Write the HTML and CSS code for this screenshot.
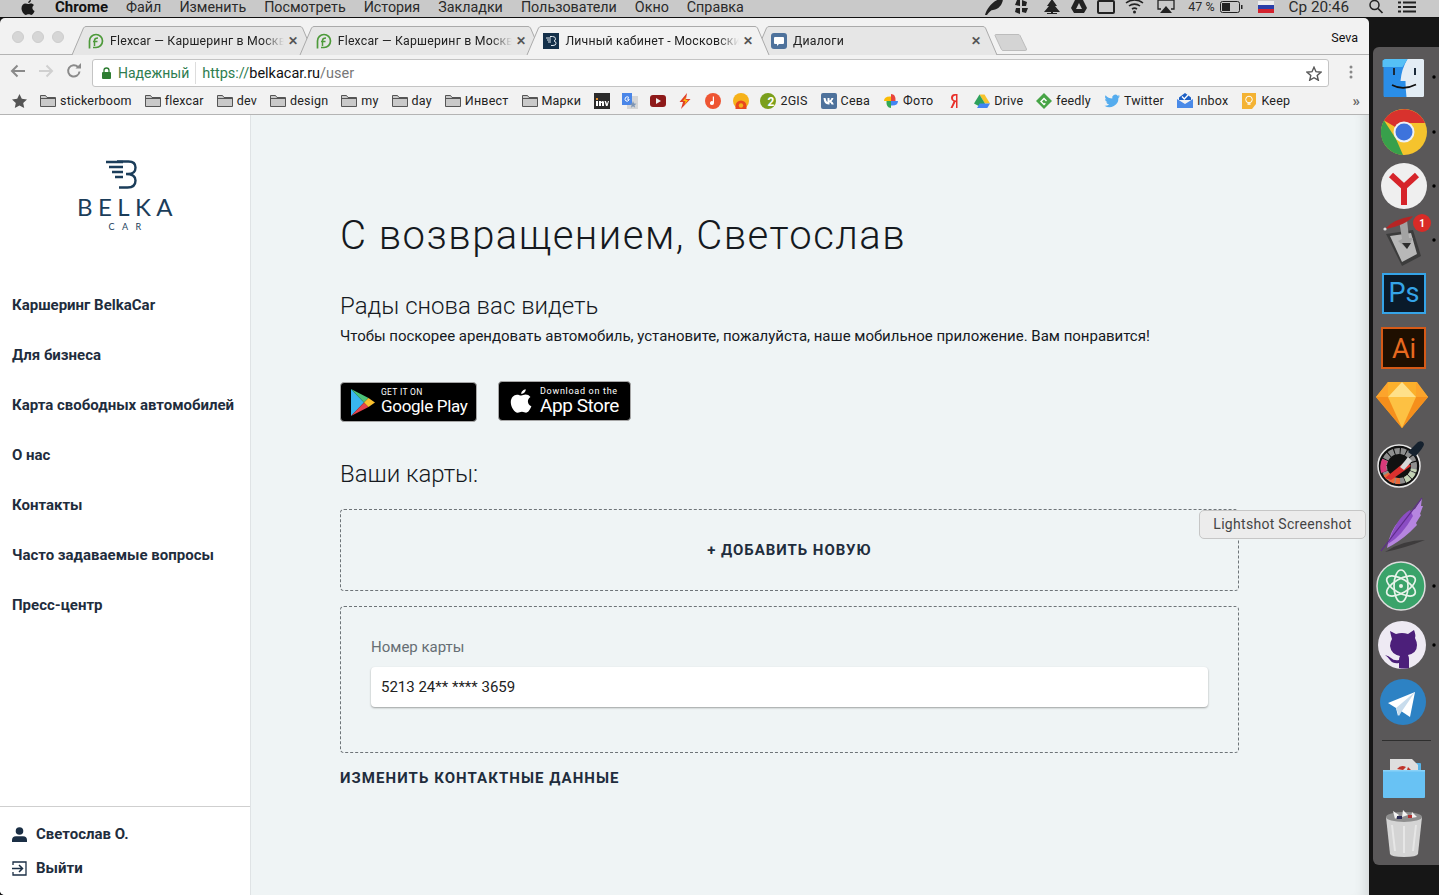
FILE: index.html
```html
<!DOCTYPE html>
<html lang="ru">
<head>
<meta charset="utf-8">
<title>Личный кабинет</title>
<link rel="stylesheet" href="styles.css">
</head>
<body>
<header class="menubar">
  <svg class="apple" width="14" height="15" viewBox="0 0 14 15"><path d="M10 0c.1 1.500-1.200 3-2.800 3C7 1.600 8.500.2 10 0zM7.200 4c.8 0 1.500-.6 2.800-.6 1 0 2.300.5 3 1.600-2.400 1.500-2 4.800.6 5.900-.6 1.500-1.800 4-3.300 4-1 0-1.500-.6-2.700-.6s-1.700.6-2.700.6C3 15 .5 11.500.5 8.300.5 5.300 2.500 3.500 4.400 3.500c1.200 0 2.100.5 2.800.5z" fill="#1a1a1a"/></svg>
  <strong class="menu-app">Chrome</strong>
  <span>Файл</span><span>Изменить</span><span>Посмотреть</span><span>История</span><span>Закладки</span><span>Пользователи</span><span>Окно</span><span>Справка</span>
  <div class="status">
    <svg width="18" height="17" viewBox="0 0 18 17"><path d="M0 16C2 9 8 1 18-1c0 5-3 11-10 12-2 0-4 2-6 5z" fill="#222"/></svg>
    <svg class="st-pin" width="16" height="14" viewBox="0 0 16 14"><path d="M7 6 2 5 4 0h3zM9 6V0l5 2-1 4zM9 8h6l-2 5-4-1zM7 8v6L2 12l1-4z" fill="#222"/></svg>
    <svg class="st-tree" width="18" height="13" viewBox="0 0 18 13"><path d="M9-2 14 5h-2l5 6H1l5-6H4zM8 10h2v3H8zM4 12h10v1H4z" fill="#222"/></svg>
    <svg class="st-drive" width="16" height="14" viewBox="0 0 16 14"><path d="M5-2h6l5 10-3 5H3L0 8zm3 5L5 9h6z" fill="#222" fill-rule="evenodd"/></svg>
    <svg class="st-rect" width="18" height="14" viewBox="0 0 18 14"><rect x="1" y="1" width="16" height="12" rx="1" fill="none" stroke="#222" stroke-width="2"/></svg>
    <svg class="st-wifi" width="19" height="13" viewBox="0 0 19 13"><g fill="none" stroke="#222" stroke-width="1.600"><path d="M1 2C6-2 13-2 18 2"/><path d="M4 5c3-2.500 8-2.500 11 0"/><path d="M7 8c1.500-1 3.500-1 5 0"/></g><circle cx="9.500" cy="11" r="1.500" fill="#222"/></svg>
    <svg class="st-air" width="18" height="14" viewBox="0 0 18 14"><path d="M4 9H1V0h16v9h-3" fill="none" stroke="#222" stroke-width="1.300"/><path d="M9 6l6 7H3z" fill="#222"/></svg>
    <span class="st-pct">47 %</span>
    <svg class="st-bat" width="23" height="12" viewBox="0 0 23 12"><rect x=".5" y=".5" width="19" height="11" rx="2" fill="none" stroke="#222"/><rect x="2" y="2" width="8" height="8" fill="#222"/><rect x="21" y="4" width="1.500" height="4" fill="#222"/></svg>
    <svg class="st-flag" width="16" height="12" viewBox="0 0 16 12"><rect width="16" height="4" fill="#eee"/><rect y="4" width="16" height="4" fill="#2b3fa8"/><rect y="8" width="16" height="4" fill="#d3222e"/></svg>
    <span class="st-clock">Ср 20:46</span>
    <svg class="st-search" width="14" height="14" viewBox="0 0 14 14"><circle cx="5.500" cy="5" r="4.500" fill="none" stroke="#222" stroke-width="1.500"/><path d="M9 8.500 13.500 13" stroke="#222" stroke-width="1.700"/></svg>
    <svg class="st-list" width="18" height="12" viewBox="0 0 18 12"><path d="M5 1.500h13M5 6h13M5 10.500h13M0 1.500h3M0 6h3M0 10.500h3" stroke="#222" stroke-width="2"/></svg>
  </div>
</header>

<div class="desktop">
  <div class="window">
    <div class="tabstrip">
      <div class="lights"><i></i><i></i><i></i></div>
      <div class="tabs">
        <div class="tab">
          <svg class="tab-shape" viewBox="0 0 242 29" preserveAspectRatio="none"><path d="M0 29 11.500 2Q12.500 .5 14 .5H228Q229.500 .5 230.500 2L242 29"/></svg>
          <svg class="fav" viewBox="0 0 16 16"><path d="M1.500 15.500V8a6.500 6.500 0 1 1 6.500 6.500H5" fill="none" stroke="#4d9a3a" stroke-width="1.700"/><path d="M6.500 13V7.500q0-2.500 3.500-2.500M5 8.500h4.500" fill="none" stroke="#4d9a3a" stroke-width="1.500"/></svg>
          <span class="tab-title">Flexcar — Каршеринг в Москв</span>
          <span class="tab-x">✕</span>
        </div>
        <div class="tab">
          <svg class="tab-shape" viewBox="0 0 242 29" preserveAspectRatio="none"><path d="M0 29 11.500 2Q12.500 .5 14 .5H228Q229.500 .5 230.500 2L242 29"/></svg>
          <svg class="fav" viewBox="0 0 16 16"><path d="M1.500 15.500V8a6.500 6.500 0 1 1 6.500 6.500H5" fill="none" stroke="#4d9a3a" stroke-width="1.700"/><path d="M6.500 13V7.500q0-2.500 3.500-2.500M5 8.500h4.500" fill="none" stroke="#4d9a3a" stroke-width="1.500"/></svg>
          <span class="tab-title">Flexcar — Каршеринг в Москв</span>
          <span class="tab-x">✕</span>
        </div>
        <div class="tab tab-active">
          <svg class="tab-shape" viewBox="0 0 242 29" preserveAspectRatio="none"><path d="M0 29 11.500 2Q12.500 .5 14 .5H228Q229.500 .5 230.500 2L242 29"/></svg>
          <svg class="fav" viewBox="0 0 16 16"><rect width="16" height="16" fill="#14304a"/><path d="M7 3.500h2.500q3 0 3 2.300 0 1.700-1.500 2.200 2 .5 2 2.300 0 2.200-3 2.200H8M3 5h5M4 7h4M5 9h3" fill="none" stroke="#dfe7ee" stroke-width="1"/></svg>
          <span class="tab-title">Личный кабинет - Московски</span>
          <span class="tab-x">✕</span>
        </div>
        <div class="tab">
          <svg class="tab-shape" viewBox="0 0 242 29" preserveAspectRatio="none"><path d="M0 29 11.500 2Q12.500 .5 14 .5H228Q229.500 .5 230.500 2L242 29"/></svg>
          <svg class="fav" viewBox="0 0 16 16"><rect width="16" height="16" rx="3" fill="#4e729c"/><path d="M4 4h8a1 1 0 0 1 1 1v5a1 1 0 0 1-1 1H8l-2 2v-2H4a1 1 0 0 1-1-1V5a1 1 0 0 1 1-1z" fill="#fff"/></svg>
          <span class="tab-title">Диалоги</span>
          <span class="tab-x">✕</span>
        </div>
      </div>
      <svg class="newtab" width="33" height="17" viewBox="0 0 33 17"><path d="M1 1.500Q1 .5 2 .5H24Q25.500 .5 26 1.500L32.500 15Q33 16.500 31 16.500H9Q8 16.500 7.500 15.500z" fill="#d4d4d4" stroke="#bcbcbc"/></svg>
      <span class="profile">Seva</span>
    </div>

    <div class="toolbar">
      <svg class="tb-btn" width="16" height="14" viewBox="0 0 16 14"><path d="M15 7H2M7.500 1.500 2 7l5.500 5.500" fill="none" stroke="#8a8a8a" stroke-width="2"/></svg>
      <svg class="tb-btn" width="16" height="14" viewBox="0 0 16 14"><path d="M1 7h13M8.500 1.500 14 7l-5.500 5.500" fill="none" stroke="#d0d0d0" stroke-width="2"/></svg>
      <svg class="tb-btn" width="16" height="16" viewBox="0 0 16 16"><path d="M13.500 8.500A5.700 5.700 0 1 1 12 4" fill="none" stroke="#8a8a8a" stroke-width="2"/><path d="M9.500 5.500h5.500V0z" fill="#8a8a8a"/></svg>
      <div class="omnibox">
        <svg class="lock" width="9" height="12" viewBox="0 0 9 12"><path d="M2 5V3.500a2.500 2.500 0 0 1 5 0V5" fill="none" stroke="#2e7d32" stroke-width="1.300"/><rect y="5" width="9" height="7" rx="1" fill="#2e7d32"/></svg>
        <span class="secure">Надежный</span>
        <span class="url"><span class="url-https">https://</span><span class="url-host">belkacar.ru</span><span class="url-path">/user</span></span>
        <svg class="omni-star" width="16" height="15" viewBox="0 0 16 15"><path d="M8 1.200 10 5.700l4.900.5-3.700 3.200 1.100 4.800L8 11.700l-4.300 2.500 1.100-4.800L1.100 6.200 6 5.700z" fill="none" stroke="#555" stroke-width="1.400"/></svg>
      </div>
      <svg class="kebab" width="4" height="14" viewBox="0 0 4 14"><circle cx="2" cy="2" r="1.500" fill="#888"/><circle cx="2" cy="7" r="1.500" fill="#888"/><circle cx="2" cy="12" r="1.500" fill="#888"/></svg>
    </div>

    <nav class="bookmarks">
      <svg class="bm-star" width="15" height="14" viewBox="0 0 15 14"><path d="M7.500 0 9.800 4.800l5.200.6-3.800 3.500 1 5.100-4.700-2.600L2.800 14l1-5.100L0 5.400l5.200-.6z" fill="#555"/></svg>
      <a class="bm"><svg class="ic" viewBox="0 0 16 14"><path d="M.5 12.500V1.500h5l1.500 2h8.500v9z" fill="#c9c9c9" stroke="#555"/><path d="M.5 4.500h15" stroke="#555"/></svg>stickerboom</a>
      <a class="bm"><svg class="ic" viewBox="0 0 16 14"><path d="M.5 12.500V1.500h5l1.500 2h8.500v9z" fill="#c9c9c9" stroke="#555"/><path d="M.5 4.500h15" stroke="#555"/></svg>flexcar</a>
      <a class="bm"><svg class="ic" viewBox="0 0 16 14"><path d="M.5 12.500V1.500h5l1.500 2h8.500v9z" fill="#c9c9c9" stroke="#555"/><path d="M.5 4.500h15" stroke="#555"/></svg>dev</a>
      <a class="bm"><svg class="ic" viewBox="0 0 16 14"><path d="M.5 12.500V1.500h5l1.500 2h8.500v9z" fill="#c9c9c9" stroke="#555"/><path d="M.5 4.500h15" stroke="#555"/></svg>design</a>
      <a class="bm"><svg class="ic" viewBox="0 0 16 14"><path d="M.5 12.500V1.500h5l1.500 2h8.500v9z" fill="#c9c9c9" stroke="#555"/><path d="M.5 4.500h15" stroke="#555"/></svg>my</a>
      <a class="bm"><svg class="ic" viewBox="0 0 16 14"><path d="M.5 12.500V1.500h5l1.500 2h8.500v9z" fill="#c9c9c9" stroke="#555"/><path d="M.5 4.500h15" stroke="#555"/></svg>day</a>
      <a class="bm"><svg class="ic" viewBox="0 0 16 14"><path d="M.5 12.500V1.500h5l1.500 2h8.500v9z" fill="#c9c9c9" stroke="#555"/><path d="M.5 4.500h15" stroke="#555"/></svg>Инвест</a>
      <a class="bm"><svg class="ic" viewBox="0 0 16 14"><path d="M.5 12.500V1.500h5l1.500 2h8.500v9z" fill="#c9c9c9" stroke="#555"/><path d="M.5 4.500h15" stroke="#555"/></svg>Марки</a>
      <a class="bm bm-icon"><svg class="ic" viewBox="0 0 16 16"><rect width="16" height="16" fill="#2b2b2b"/><path d="M2 8h2v5H2zM5 8h2v1q2-2 3 0v4H8v-3H7v3H5zM10.500 8h1.500l1 3 1-3h1l-1.500 5h-1.500z" fill="#fff"/><rect x="2" y="5" width="2" height="2" fill="#e8912d"/></svg></a>
      <a class="bm bm-icon"><svg class="ic" viewBox="0 0 16 16"><rect x="5" y="3" width="11" height="13" fill="#d5d5d5"/><path d="M0 0h10v12H0z" fill="#4a86e8"/><path d="M11 8l1 2.500 2.500.2-2 1.500.7 2.500-2.200-1.400-2 1.400.6-2.500-2-1.500 2.500-.2z" fill="#7d95b5"/><path d="M7 4.500Q5 3 3.500 4.500 2.300 6.500 4 8q2 .8 3-1V6H5" fill="none" stroke="#fff" stroke-width="1"/></svg></a>
      <a class="bm bm-icon"><svg class="ic" viewBox="0 0 16 16"><rect y="2" width="16" height="12" rx="3" fill="#8e1a1a"/><path d="M6 5l5 3-5 3z" fill="#eee"/></svg></a>
      <a class="bm bm-icon"><svg class="ic" viewBox="0 0 16 16"><path d="M10 0 2.500 9H6L4 16l9.500-10H9z" fill="#e0402a"/><path d="M9 4 6 8h2.500L7.500 12l3.500-5H8.500z" fill="#ffc107"/></svg></a>
      <a class="bm bm-icon"><svg class="ic" viewBox="0 0 16 16"><circle cx="8" cy="8" r="8" fill="#ee5533"/><path d="M9 3.500v6.500a2 2 0 1 1-1.200-1.800V3.500z" fill="#fff"/></svg></a>
      <a class="bm bm-icon"><svg class="ic" viewBox="0 0 16 16"><circle cx="8" cy="8" r="8" fill="#f6b21a"/><path d="M2.500 16v-3a5.500 5.500 0 0 1 11 0v3z" fill="#e8471e"/><circle cx="8" cy="12.500" r="2.200" fill="#f6b21a"/></svg></a>
      <a class="bm"><svg class="ic" viewBox="0 0 16 16"><circle cx="8" cy="8" r="8" fill="#7a9f1c"/><text x="7.500" y="13" class="ic-2">2</text></svg>2GIS</a>
      <a class="bm"><svg class="ic" viewBox="0 0 16 16"><rect width="16" height="16" rx="2" fill="#4e729c"/><path d="M2.500 5h2q.5 3 2 4V5h2v2.500q1.200-.5 2-2.500h2q-.5 2-2 3.200 1.700 1 2.300 3.300h-2.200q-.7-1.700-2.100-2.200v2.200h-1Q3 11.500 2.500 5z" fill="#fff"/></svg>Сева</a>
      <a class="bm"><svg class="ic" viewBox="0 0 16 16"><path d="M8 8V1Q13 1 12.500 8z" fill="#e8453c"/><path d="M8 8h7Q15 13 8 12.500z" fill="#4285f4"/><path d="M8 8v7Q3 15 3.500 8z" fill="#34a853"/><path d="M8 8H1Q1 3 8 3.500z" fill="#fbbc05"/></svg>Фото</a>
      <a class="bm bm-icon"><svg class="ic" viewBox="0 0 16 16"><path d="M11.500 1H9Q5 1 5 5q0 2.500 2.500 3.500L4.500 15h2L9.500 9H10v6h1.500zM10 2.500v5Q7 7.500 7 5t3-2.500z" fill="#e8302a"/></svg></a>
      <a class="bm"><svg class="ic" viewBox="0 0 16 16"><path d="M5.500 1.500h5L16 10.500h-5z" fill="#f7c32a"/><path d="M5.500 1.500 11 10.500 8.300 15 0 10.500z" fill="#2ea15c"/><path d="M3 15l2.700-4.500H16L13.300 15z" fill="#4285f4"/></svg>Drive</a>
      <a class="bm"><svg class="ic" viewBox="0 0 16 16"><path d="M8 0 16 8l-8 8L0 8z" fill="#47a446"/><path d="M8 4.500 11 7.500l-1 1-2-2-2 2 2 2 .8-.8 1 1L8 12.500 4 8.500z" fill="#fff"/></svg>feedly</a>
      <a class="bm"><svg class="ic" viewBox="0 0 16 16"><path d="M16 3.200a6 6 0 0 1-1.800.5 3 3 0 0 0 1.400-1.800 6 6 0 0 1-2 .8 3.100 3.100 0 0 0-5.300 2.900A9 9 0 0 1 1.600 2.300 3.200 3.200 0 0 0 2.500 6.500 3 3 0 0 1 1 6.100 3.200 3.200 0 0 0 3.600 9.200q-.7.200-1.400 0a3.200 3.200 0 0 0 2.900 2.200A6.300 6.300 0 0 1 .5 12.800 9 9 0 0 0 14.400 5q.9-.7 1.600-1.800z" fill="#55acee"/></svg>Twitter</a>
      <a class="bm"><svg class="ic" viewBox="0 0 16 16"><path d="M8 0 14 4.500V7H2V4.500z" fill="#1c5fc4"/><path d="M5 3.500 7.300 6 11 2" fill="none" stroke="#fff" stroke-width="1.300"/><path d="M0 6 8 11l8-5v9H0z" fill="#4a8ae8"/></svg>Inbox</a>
      <a class="bm"><svg class="ic" viewBox="0 0 16 16"><path d="M1 0h14v11l-4 5H1z" fill="#f4b334"/><circle cx="8" cy="6.500" r="3.300" fill="none" stroke="#fff"/><path d="M6.500 11h3" stroke="#fff" stroke-width="1.300"/></svg>Keep</a>
      <span class="bm-more">»</span>
    </nav>

    <div class="page">
      <aside class="sidebar">
        <div class="logo">
          <svg class="logo-mark" width="32" height="29" viewBox="0 0 32 29"><g fill="none" stroke="#1b3d5a" stroke-width="2.400"><path d="M11 1.500h11.500q7 0 7 6 0 6.500-7.500 6.500h-2q9.500 0 9.500 6.500 0 7-8 7H13"/><path d="M0 2h17M3 7h14M6 12h11M9 17h8"/></g></svg>
          <div class="logo-name">BELKA</div>
          <div class="logo-sub">CAR</div>
        </div>
        <ul class="nav">
          <li>Каршеринг BelkaCar</li>
          <li>Для бизнеса</li>
          <li>Карта свободных автомобилей</li>
          <li>О нас</li>
          <li>Контакты</li>
          <li>Часто задаваемые вопросы</li>
          <li>Пресс-центр</li>
        </ul>
        <div class="account">
          <div class="acc-row"><svg width="15" height="15" viewBox="0 0 15 15"><circle cx="7.500" cy="4" r="3.800" fill="#1b2f45"/><path d="M0 15v-2q0-3.500 4-3.800h7q4 .3 4 3.800v2z" fill="#1b2f45"/></svg>Светослав О.</div>
          <div class="acc-row"><svg width="15" height="15" viewBox="0 0 15 15"><path d="M1 4V1h13v13H1v-3" fill="none" stroke="#1b2f45" stroke-width="1.300"/><path d="M0 7.500h10M7 4l3.500 3.500L7 11" fill="none" stroke="#1b2f45" stroke-width="1.500"/></svg>Выйти</div>
        </div>
      </aside>

      <main class="content">
        <h1>С возвращением, Светослав</h1>
        <h2>Рады снова вас видеть</h2>
        <p class="lead">Чтобы поскорее арендовать автомобиль, установите, пожалуйста, наше мобильное приложение. Вам понравится!</p>
        <div class="stores">
          <a class="store store-google">
            <svg width="25" height="27" viewBox="0 0 25 27"><path d="M1 0v27l13-13.500z" fill="#38b6f0"/><path d="M1 0l13 13.500L18.500 9z" fill="#4cc37a"/><path d="M1 27l13-13.500 4.500 4.500z" fill="#e5424c"/><path d="M18.500 9 25 13.500 18.500 18 14 13.500z" fill="#fbc02d"/></svg>
            <span class="store-text"><small class="gp-small">GET IT ON</small><b class="gp-big">Google Play</b></span>
          </a>
          <a class="store store-apple">
            <svg width="22" height="26" viewBox="0 0 14 15"><path d="M10 0c.1 1.500-1.200 3-2.800 3C7 1.600 8.500.2 10 0zM7.200 4c.8 0 1.500-.6 2.800-.6 1 0 2.300.5 3 1.600-2.400 1.500-2 4.800.6 5.900-.6 1.500-1.800 4-3.300 4-1 0-1.500-.6-2.700-.6s-1.700.6-2.700.6C3 15 .5 11.500.5 8.300.5 5.300 2.500 3.500 4.400 3.500c1.200 0 2.100.5 2.800.5z" fill="#fff"/></svg>
            <span class="store-text"><small class="as-small">Download on the</small><b class="as-big">App Store</b></span>
          </a>
        </div>
        <h2 class="h-cards">Ваши карты:</h2>
        <div class="card-add">+ ДОБАВИТЬ НОВУЮ</div>
        <div class="card-box">
          <label class="card-label">Номер карты</label>
          <div class="card-input">5213 24** **** 3659</div>
        </div>
        <div class="contacts">ИЗМЕНИТЬ КОНТАКТНЫЕ ДАННЫЕ</div>
      </main>
      <div class="tooltip">Lightshot Screenshot</div>
    </div>
  </div>

  <aside class="dock">
    <svg width="66" height="58" viewBox="1373 47 66 58">
      <rect x="1384" y="59" width="40" height="38" rx="1.500" fill="#e3edf5"/>
      <path d="M1385.500 59h22q-6 10-7 22h5q0 8 1 16h-21.500q-1.500 0-1.500-1.500V60.500q0-1.500 1.500-1.500z" fill="#2a8ee8"/>
      <path d="M1385.500 59h22l-5 8h-20V60.500z" fill="#55c0f6"/>
      <path d="M1394 68v7M1415 68v7" stroke="#1a2a3a" stroke-width="2"/>
      <path d="M1392 85q11 6 24-.5" fill="none" stroke="#111" stroke-width="1.600"/>
      <circle cx="1434" cy="77" r="1.700" fill="#000"/>
    </svg>
    <svg width="66" height="54" viewBox="1373 105 66 54">
      <circle cx="1404" cy="132" r="23" fill="#f5c32d"/>
      <path d="M1384.100 120.500A23 23 0 0 1 1425 123l-21 0-7 5z" fill="#d8322d"/>
      <path d="M1384 120.500 1396 139l7 16A23 23 0 0 1 1384 120.500z" fill="#38a04b"/>
      <circle cx="1404" cy="132" r="10.500" fill="#eef1f5"/>
      <circle cx="1404" cy="132" r="8.500" fill="#3d73dc"/>
      <circle cx="1434" cy="132" r="1.700" fill="#000"/>
    </svg>
    <svg width="66" height="54" viewBox="1373 159 66 54">
      <circle cx="1404" cy="186" r="23" fill="#efefef"/>
      <path d="M1391 175l13 12 13-12M1404 187v18" fill="none" stroke="#d6242a" stroke-width="6"/>
      <circle cx="1434" cy="186" r="1.700" fill="#000"/>
    </svg>
    <svg width="66" height="55" viewBox="1373 213 66 55">
      <path d="M1386 234l27-4 8 26-19 10z" fill="#3c3c3c"/>
      <path d="M1390 236l21-3 6 21-15 8z" fill="#b8b8b8"/>
      <path d="M1399 220h8l2 18 4 0-6 11-9-8 4-2z" fill="#a3a3a3"/>
      <path d="M1402 243l5 6 4-6z" fill="#2d2d2d"/>
      <path d="M1385 229q8-10 28-13-6 9-28 13z" fill="#b52525"/>
      <circle cx="1385" cy="229" r="1.600" fill="#ddd"/>
      <circle cx="1422" cy="223" r="9" fill="#d92b27"/>
      <text x="1422" y="227" class="dock-badge">1</text>
      <circle cx="1434" cy="240" r="1.700" fill="#000"/>
    </svg>
    <svg width="66" height="53" viewBox="1373 268 66 53">
      <rect x="1383" y="274" width="42" height="39" fill="#0a1a2a" stroke="#35a4e8" stroke-width="2"/>
      <text x="1404" y="302" class="dock-app dock-ps">Ps</text>
    </svg>
    <svg width="66" height="55" viewBox="1373 321 66 55">
      <rect x="1382" y="328" width="43" height="40" fill="#1f0f00" stroke="#d65a17" stroke-width="2"/>
      <text x="1404" y="358" class="dock-app dock-ai">Ai</text>
    </svg>
    <svg width="66" height="57" viewBox="1373 376 66 57">
      <path d="M1388 382h29l11 15-26 31-26-31z" fill="#fbb02c"/>
      <path d="M1376 397h52l-26 31z" fill="#f58f1c"/>
      <path d="M1388 397h28l-14 31z" fill="#fdc143"/>
      <path d="M1388 397l14-15 14 15z" fill="#fee08a"/>
      <path d="M1376 397l12-15v15zM1428 397l-12-15v15z" fill="#fca42c"/>
    </svg>
    <svg width="66" height="61" viewBox="1373 433 66 61">
      <circle cx="1399" cy="466" r="21" fill="#111" stroke="#e8e8e8" stroke-width="1.500"/>
      <circle cx="1399" cy="466" r="15" fill="none" stroke="#8e8e8e" stroke-width="6" stroke-dasharray="5 1"/>
      <path d="M1384 472a16 16 0 0 1 1-12" fill="none" stroke="#d83a7a" stroke-width="6"/>
      <path d="M1386 474a15 15 0 0 0 14 7" fill="none" stroke="#e8683a" stroke-width="6" stroke-dasharray="5 1"/>
      <path d="M1405 480a15 15 0 0 0 9-11" fill="none" stroke="#c2d2b4" stroke-width="6" stroke-dasharray="5 1"/>
      <path d="M1385 478 1406 461l5 5-20 14z" fill="#d9302e"/>
      <path d="M1400 467l8-10 4 4-8 9z" fill="#d8d8d8"/>
      <path d="M1408 452l10-10q5-2 6 2 0 3-9 13z" fill="#15212e"/>
    </svg>
    <svg width="66" height="61" viewBox="1373 494 66 61">
      <path d="M1385 552q20-4 40-12-22 0-40 12z" fill="#3d3b3c"/>
      <path d="M1422 498l-1 8 2 0-3 8 1 1-5 8 1 2-7 7q-11 10-23 16 3-18 13-28l3-1 1-3q4-3 6-3l2-3 3-1z" fill="#b685e0"/>
      <path d="M1410 510q-14 8-22 34 14-8 25-28z" fill="#8b4dc4"/>
      <path d="M1422 498 1381 551" stroke="#5e2c8a" stroke-width="1.200"/>
    </svg>
    <svg width="66" height="61" viewBox="1373 555 66 61">
      <circle cx="1401" cy="586" r="24" fill="#3aa36a" stroke="#ddd" stroke-width="1.500"/>
      <g fill="none" stroke="#e8f3ea" stroke-width="1.700">
        <ellipse cx="1401" cy="586" rx="16" ry="7" transform="rotate(30 1401 586)"/>
        <ellipse cx="1401" cy="586" rx="16" ry="7" transform="rotate(90 1401 586)"/>
        <ellipse cx="1401" cy="586" rx="16" ry="7" transform="rotate(150 1401 586)"/>
      </g>
      <circle cx="1401" cy="586" r="2" fill="#e8f3ea"/>
      <circle cx="1434" cy="586" r="1.700" fill="#000"/>
    </svg>
    <svg width="66" height="58" viewBox="1373 616 66 58">
      <circle cx="1402" cy="645" r="24" fill="#eeeaf3"/>
      <path d="M1390 631l6 3q6-2 12 0l6-4q2 5 1 8 2 4 2 7 0 8-9 10 1 2 1 4v9q-5 1-10 0v-5q-6 1-9-3-2-3-5-5 4 1 6 3 3 3 8 2 0-2 1-4-9-2-10-10 0-4 2-7-1-3-2-8z" fill="#4c1f7a"/>
      <circle cx="1434" cy="645" r="1.700" fill="#000"/>
    </svg>
    <svg width="66" height="58" viewBox="1373 674 66 58">
      <circle cx="1403" cy="702" r="23" fill="#2d82c4"/>
      <path d="M1388 703l27-11-5 25-9-6-3 5-2-8z" fill="#fff"/>
      <path d="M1396 708l19-16-13 19-3 5z" fill="#c8dcec"/>
    </svg>
    <div class="dock-sep"></div>
    <svg width="66" height="57" viewBox="1373 748 66 57">
      <path d="M1410 763h10q1 0 1 1v8h-11z" fill="#58b4e8"/>
      <path d="M1390 759h22l6 6v10h-28z" fill="#dedede"/>
      <path d="M1397 769q4-5 9-2l-3 3zM1408 767l3 3h-4z" fill="#c0352b"/>
      <path d="M1383 770h42v27q0 1-1 1h-40q-1 0-1-1z" fill="#68c2f4"/>
      <path d="M1383 770h42v1.500h-42z" fill="#8ad2f8"/>
    </svg>
    <svg width="66" height="60" viewBox="1373 805 66 60">
      <path d="M1386 817l4 37q1 3 14 3t14-3l4-37z" fill="#d4d4d4"/>
      <path d="M1392 825l3 26M1404 826v27M1416 825l-3 26" stroke="#e6e6e6" stroke-width="2"/>
      <ellipse cx="1404" cy="817" rx="18" ry="5" fill="#8e8e8e"/>
      <path d="M1393 811l6 4-4 4zM1403 810l5 5-6 2zM1412 812l5 5-6 1z" fill="#f2f2f2"/>
      <path d="M1397 816h5v3h-5z" fill="#2a2a55"/><path d="M1408 815h4v3h-4z" fill="#b03030"/>
    </svg>
  </aside>
</div>
</body>
</html>
```

FILE: styles.css
```css
* { box-sizing: border-box; }
html, body { margin: 0; padding: 0; }
body {
  width: 1439px;
  height: 895px;
  overflow: hidden;
  background: #161616;
  font-family: Roboto, "Liberation Sans", sans-serif;
  color: #1c2a3a;
  display: flex;
  flex-direction: column;
}

/* macOS menu bar */
.menubar {
  height: 18px;
  flex: none;
  background: #c9c9c9;
  border-bottom: 1px solid #111;
  display: flex;
  align-items: center;
  gap: 18px;
  padding: 0 0 3px 21px;
  font-size: 14.300px;
  color: #2a2a2a;
  white-space: nowrap;
  overflow: hidden;
  line-height: 14px;
}
.apple { margin-right: 2px; flex: none; }
.menu-app { font-weight: 700; color: #111; font-size: 15px; }
.status { margin-left: auto; display: flex; align-items: center; padding-right: 23px; }
.status svg { flex: none; display: block; overflow: visible; }
.st-pin { margin-left: 10px; }
.st-tree { margin-left: 14px; }
.st-drive { margin-left: 10px; }
.st-rect { margin-left: 10px; }
.st-wifi { margin-left: 10px; }
.st-air { margin-left: 13px; }
.st-pct { margin-left: 13px; font-size: 12.500px; }
.st-bat { margin-left: 5px; }
.st-flag { margin-left: 15px; }
.st-clock { margin-left: 15px; font-size: 15.300px; }
.st-search { margin-left: 20px; }
.st-list { margin-left: 15px; }

.desktop { flex: 1; display: flex; min-height: 0; }

/* browser window */
.window {
  width: 1369px;
  flex: none;
  background: #f2f2f2;
  border-radius: 5px 5px 0 5px;
  overflow: hidden;
  display: flex;
  flex-direction: column;
  position: relative;
}
.tabstrip {
  height: 37px;
  flex: none;
  display: flex;
  align-items: flex-end;
  border-bottom: 1px solid #b4b4b4;
  position: relative;
  padding-left: 12px;
}
.lights { display: flex; gap: 8px; align-self: flex-start; margin-top: 13px; width: 60px; flex: none; }
.lights i { width: 12px; height: 12px; border-radius: 50%; background: #d6d6d6; border: 1px solid #cdcdcd; }
.tabs { display: flex; height: 29px; margin-bottom: -1px; }
.tab {
  width: 242px;
  margin-right: -14.300px;
  position: relative;
  display: flex;
  align-items: center;
  padding: 1px 9px 0 16px;
  font-size: 12.300px;
  color: #222;
}
.tab-shape { position: absolute; left: 0; top: 0; width: 100%; height: 100%; overflow: visible; }
.tab-shape path { fill: #e6e6e6; stroke: #aaa; stroke-width: 1; }
.tab-active { z-index: 2; }
.tab-active .tab-shape path { fill: #f2f2f2; }
.fav { width: 16px; height: 16px; position: relative; flex: none; }
.tab-title {
  position: relative;
  margin-left: 6px;
  width: 174px;
  flex: none;
  white-space: nowrap;
  overflow: hidden;
  -webkit-mask-image: linear-gradient(to right, #000 88%, transparent);
  mask-image: linear-gradient(to right, #000 88%, transparent);
  letter-spacing: .2px;
}
.tab-x { position: relative; margin-left: 4px; font-size: 12px; color: #555; font-weight: 700; }
.newtab { flex: none; margin: 0 0 3px 11px; overflow: visible; }
.profile { margin-left: auto; align-self: flex-start; margin-top: 12px; margin-right: 11px; font-size: 12.500px; color: #111; }

.toolbar {
  height: 32px;
  flex: none;
  display: flex;
  align-items: center;
  padding: 0 16px 0 10px;
  gap: 12px;
}
.tb-btn { flex: none; }
.omnibox {
  margin-left: -2px;
  width: 1237px;
  height: 28px;
  margin-top: 4px;
  flex: none;
  background: #fff;
  border: 1px solid #c4c4c4;
  border-radius: 3px;
  display: flex;
  align-items: center;
  padding: 0 6px 0 9px;
  font-size: 14.500px;
}
.lock { flex: none; }
.secure { color: #2e7d4f; margin-left: 7px; padding-right: 6px; border-right: 1px solid #ddd; line-height: 22px; margin-right: 6px; font-size: 14px; }
.url-https { color: #2e7d4f; }
.url-host { color: #111; }
.url-path { color: #777; }
.omni-star { margin-left: auto; }
.kebab { margin-left: 8px; margin-top: 2px; flex: none; }

.bookmarks {
  height: 28px;
  flex: none;
  display: flex;
  align-items: center;
  gap: 13px;
  padding: 0 9px 0 12px;
  border-bottom: 1px solid #b4b4b4;
  font-size: 12.500px;
  color: #222;
}
.bm-star { flex: none; }
.bm { display: flex; align-items: center; gap: 4px; white-space: nowrap; letter-spacing: .2px; }
.bm-icon { margin-right: -1.300px; }
.ic { width: 16px; height: 16px; flex: none; display: block; }
.ic-2 { font: 700 12px Roboto, sans-serif; fill: #fff; }
.bm-more { margin-left: auto; font-size: 15px; color: #666; font-weight: 700; line-height: 14px; }

/* page */
.page { flex: 1; display: flex; min-height: 0; position: relative; background: #eff4f5; }
.sidebar {
  width: 251px;
  flex: none;
  background: #fff;
  border-right: 1px solid #dfe3e5;
  display: flex;
  flex-direction: column;
}
.logo { height: 165px; flex: none; display: flex; flex-direction: column; align-items: center; padding-top: 45px; color: #1b3d5a; }
.logo-mark { display: block; margin: 0 6px 7px 0; overflow: visible; }
.logo-name { font-family: Lato, sans-serif; font-weight: 400; font-size: 24px; line-height: 22px; letter-spacing: 5.400px; padding-left: 5px; }
.logo-sub { font-family: Lato, sans-serif; font-size: 9px; line-height: 12px; letter-spacing: 7.500px; padding-left: 7px; margin-top: 3px; }
.nav { list-style: none; margin: 0; padding: 0; }
.nav li { height: 50px; line-height: 50px; padding-left: 12px; font-size: 15px; font-weight: 700; color: #1f2d3d; white-space: nowrap; }
.account { margin-top: auto; border-top: 1px solid #cfcfcf; padding: 10px 0; }
.acc-row { height: 34px; display: flex; align-items: center; gap: 9px; padding-left: 12px; font-size: 15px; font-weight: 700; color: #1f2d3d; }
.acc-row svg { flex: none; }

.content {
  flex: 1;
  min-width: 0;
  padding: 96px 130px 0 89px;
  box-shadow: inset -14px 0 14px -12px rgba(0,0,0,.14);
}
h1 { margin: 0; font-size: 40px; line-height: 48px; font-weight: 300; letter-spacing: 1.500px; color: #15191e; white-space: nowrap; padding-top: 1px; margin-bottom: -1px; }
h2 { margin: 32px 0 0; font-size: 24px; line-height: 30px; font-weight: 300; color: #15191e; }
.lead { margin: 5px 0 0; font-size: 15px; line-height: 20px; color: #15191e; white-space: nowrap; letter-spacing: -.01px; }
.stores { display: flex; align-items: flex-start; gap: 21px; margin-top: 35px; }
.store {
  display: flex;
  align-items: center;
  background: #000;
  border: 1px solid #a6a6a6;
  border-radius: 4px;
  color: #fff;
}
.store-google { width: 137px; height: 40px; margin-top: 1px; padding-left: 9px; gap: 6px; }
.store-apple { width: 133px; height: 40px; padding-left: 11px; gap: 8px; }
.store-text { display: flex; flex-direction: column; white-space: nowrap; }
.gp-small { font-size: 8.500px; line-height: 9px; letter-spacing: .3px; }
.gp-big { font-size: 17px; line-height: 19px; font-weight: 400; letter-spacing: -.3px; }
.as-small { font-size: 9px; line-height: 10px; letter-spacing: .7px; }
.as-big { font-size: 19px; line-height: 20px; font-weight: 400; letter-spacing: -.45px; }
.h-cards { margin-top: 37px; }
.card-add {
  margin-top: 20px;
  height: 82px;
  border: 1px dashed #6e7478;
  border-radius: 4px;
  display: flex;
  align-items: center;
  justify-content: center;
  font-size: 15px;
  font-weight: 700;
  letter-spacing: .95px;
  color: #1f2d3d;
}
.card-box {
  margin-top: 15px;
  height: 147px;
  border: 1px dashed #6e7478;
  border-radius: 4px;
  padding: 30px 30px 0;
}
.card-label { display: block; font-size: 15px; line-height: 20px; color: #666e74; }
.card-input {
  margin-top: 10px;
  height: 40px;
  background: #fff;
  border-radius: 4px;
  box-shadow: 0 1px 2px rgba(0,0,0,.35);
  padding: 0 10px;
  display: flex;
  align-items: center;
  font-size: 15px;
  color: #222;
}
.contacts { margin-top: 16px; font-size: 15px; line-height: 18px; font-weight: 700; letter-spacing: 1.050px; color: #1f2d3d; }
.tooltip {
  position: absolute;
  left: 1199px;
  top: 395px;
  width: 167px;
  height: 29px;
  background: #ececec;
  border: 1px solid #c6c6c6;
  border-radius: 5px;
  font-size: 14px;
  line-height: 27px;
  text-align: center;
  color: #444;
  letter-spacing: .3px;
}

/* dock */
.dock {
  width: 66px;
  height: 818px;
  flex: none;
  margin: 29px 0 0 4px;
  background: #5a5859;
  border-radius: 6px 0 0 6px;
  display: flex;
  flex-direction: column;
  overflow: hidden;
}
.dock svg { display: block; flex: none; }
.dock-sep { height: 1px; margin: 8px 8px 7px 9px; background: #2e2e2e; flex: none; }
.dock-badge { font: 700 10px Roboto, sans-serif; fill: #fff; text-anchor: middle; }
.dock-app { font: 400 27px Roboto, sans-serif; text-anchor: middle; }
.dock-ps { fill: #35a4e8; }
.dock-ai { fill: #e8691f; }
```
